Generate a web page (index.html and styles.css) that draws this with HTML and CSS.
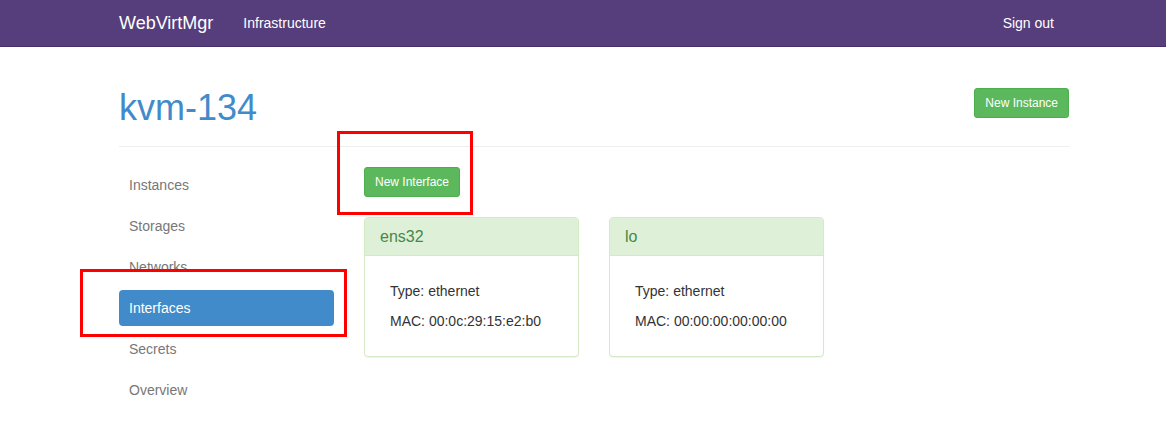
FILE: index.html
```html
<!DOCTYPE html>
<html lang="en">
<head>
<meta charset="utf-8">
<title>kvm-134 - Interfaces</title>
<link rel="stylesheet" href="styles.css">
</head>
<body>
<nav class="navbar">
  <div class="nav-inner">
    <a class="brand" href="#">WebVirtMgr</a>
    <a class="nav-link" href="#">Infrastructure</a>
    <span class="spacer"></span>
    <a class="nav-link signout" href="#">Sign out</a>
  </div>
</nav>
<main class="page">
  <div class="page-header">
    <h1 class="title">kvm-134</h1>
    <a class="btn btn-success" href="#">New Instance</a>
  </div>
  <div class="layout">
    <ul class="side">
      <li><a href="#">Instances</a></li>
      <li><a href="#">Storages</a></li>
      <li><a href="#">Networks</a></li>
      <li class="active"><a href="#">Interfaces</a></li>
      <li><a href="#">Secrets</a></li>
      <li><a href="#">Overview</a></li>
    </ul>
    <div class="content">
      <a class="btn btn-success" href="#">New Interface</a>
      <div class="cards">
        <div class="card">
          <div class="card-head">ens32</div>
          <div class="card-body">
            <p>Type: ethernet</p>
            <p>MAC: 00:0c:29:15:e2:b0</p>
          </div>
        </div>
        <div class="card">
          <div class="card-head">lo</div>
          <div class="card-body">
            <p>Type: ethernet</p>
            <p>MAC: 00:00:00:00:00:00</p>
          </div>
        </div>
      </div>
    </div>
  </div>
</main>
<div class="mark mark-button"></div>
<div class="mark mark-nav"></div>
</body>
</html>
```
FILE: styles.css
```css
* { box-sizing: border-box; }
html, body { margin: 0; padding: 0; }
body {
  font-family: "Liberation Sans", Arial, Helvetica, sans-serif;
  font-size: 14px;
  line-height: 20px;
  color: #333;
  background: #fff;
}
a { text-decoration: none; }

.navbar {
  height: 47px;
  background: #563d7c;
  border-bottom: 1px solid #45306a;
}
.nav-inner {
  margin-left: 119px;
  width: 950px;
  height: 46px;
  display: flex;
  align-items: center;
}
.brand {
  font-size: 18px;
  line-height: 20px;
  color: #fff;
  margin-right: 30px;
}
.nav-link {
  font-size: 14px;
  line-height: 20px;
  color: #fff;
}
.spacer { flex: 1; }
.signout { margin-right: 15px; }

.page {
  margin-left: 119px;
  width: 950px;
}
.page-header {
  margin-top: 41px;
  padding-bottom: 18px;
  border-bottom: 1px solid #eee;
  display: flex;
  justify-content: space-between;
  align-items: flex-start;
}
.title {
  margin: 0;
  font-size: 36px;
  line-height: 40px;
  font-weight: normal;
  color: #428bca;
}
.btn {
  display: inline-block;
  padding: 5px 10px;
  font-size: 12px;
  line-height: 18px;
  border-radius: 3px;
  border: 1px solid transparent;
}
.btn-success {
  color: #fff;
  background: #5cb85c;
  border-color: #4cae4c;
}

.layout {
  display: flex;
  gap: 30px;
  margin-top: 20px;
}
.side {
  list-style: none;
  margin: 0;
  padding: 0;
  width: 215px;
  flex: none;
}
.side li + li { margin-top: 5px; }
.side a {
  display: block;
  padding: 8px 10px;
  line-height: 20px;
  color: #777;
  border-radius: 4px;
}
.side .active a {
  background: #428bca;
  color: #fff;
}

.content { flex: 1; }
.cards {
  display: flex;
  gap: 30px;
  margin-top: 20px;
}
.card {
  width: 215px;
  border: 1px solid #d6e9c6;
  border-radius: 4px;
  background: #fff;
  box-shadow: 0 1px 1px rgba(0, 0, 0, 0.05);
}
.card-head {
  padding: 10px 15px;
  font-size: 16px;
  line-height: 17px;
  color: #468847;
  background: #dff0d8;
  border-bottom: 1px solid #d6e9c6;
  border-radius: 3px 3px 0 0;
}
.card-body {
  padding: 25px 25px 25px;
}
.card-body p {
  margin: 0;
  line-height: 20px;
}
.card-body p + p { margin-top: 10px; }

.mark {
  position: absolute;
  border: 3px solid #ff0000;
}
.mark-button {
  left: 337px;
  top: 131px;
  width: 136px;
  height: 84px;
}
.mark-nav {
  left: 80px;
  top: 269px;
  width: 267px;
  height: 68px;
}
```
